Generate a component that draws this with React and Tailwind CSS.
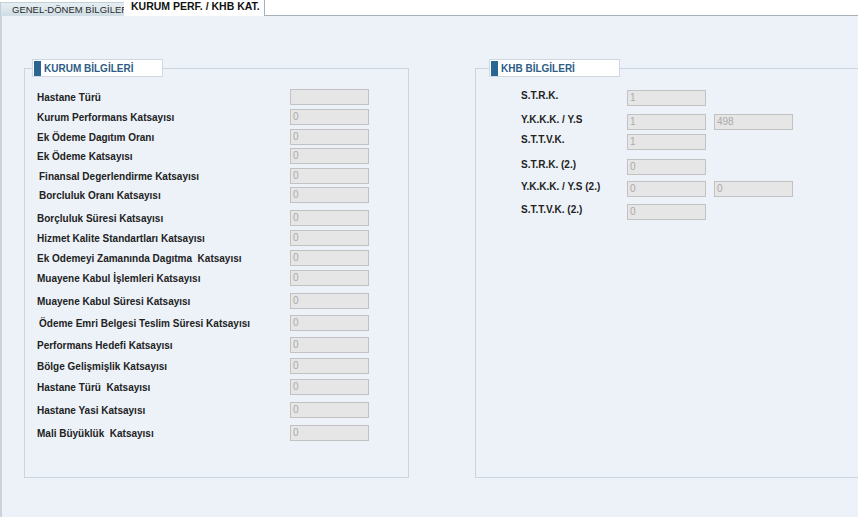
const kurumRows = [
  { label: "Hastane Türü", value: "", h: "h-[20px]" },
  { label: "Kurum Performans Katsayısı", value: "0", h: "h-[20px]" },
  { label: "Ek Ödeme Dagıtım Oranı", value: "0", h: "h-[19px]" },
  { label: "Ek Ödeme Katsayısı", value: "0", h: "h-[20px]" },
  { label: "Finansal Degerlendirme Katsayısı", value: "0", h: "h-[19px]", indent: true },
  { label: "Borcluluk Oranı Katsayısı", value: "0", h: "h-[23px]", indent: true },
  { label: "Borçluluk Süresi Katsayısı", value: "0", h: "h-[20px]" },
  { label: "Hizmet Kalite Standartları Katsayısı", value: "0", h: "h-[20px]" },
  { label: "Ek Odemeyi Zamanında Dagıtma  Katsayısı", value: "0", h: "h-[20px]" },
  { label: "Muayene Kabul İşlemleri Katsayısı", value: "0", h: "h-[23px]" },
  { label: "Muayene Kabul Süresi Katsayısı", value: "0", h: "h-[22px]" },
  { label: "Ödeme Emri Belgesi Teslim Süresi Katsayısı", value: "0", h: "h-[22px]", indent: true },
  { label: "Performans Hedefi Katsayısı", value: "0", h: "h-[21px]" },
  { label: "Bölge Gelişmişlik Katsayısı", value: "0", h: "h-[21px]" },
  { label: "Hastane Türü  Katsayısı", value: "0", h: "h-[23px]" },
  { label: "Hastane Yasi Katsayısı", value: "0", h: "h-[23px]" },
  { label: "Mali Büyüklük  Katsayısı", value: "0", h: "h-[20px]" },
];

const khbRows = [
  { label: "S.T.R.K.", values: ["1"], h: "h-[24px]" },
  { label: "Y.K.K.K. / Y.S", values: ["1", "498"], h: "h-[20px]" },
  { label: "S.T.T.V.K.", values: ["1"], h: "h-[25px]" },
  { label: "S.T.R.K. (2.)", values: ["0"], h: "h-[22px]" },
  { label: "Y.K.K.K. / Y.S (2.)", values: ["0", "0"], h: "h-[23px]" },
  { label: "S.T.T.V.K. (2.)", values: ["0"], h: "h-[20px]" },
];

const font = "font-['Liberation_Sans',Arial,sans-serif]";

const Field = ({ value }) => (
  <div className="w-[79px] h-[16px] shrink-0 bg-[#e6e6e6] border border-[#c2c2c2] px-[2px] text-[10px] leading-[14px] text-[#aaaaaa]">
    {value}
  </div>
);

const Legend = ({ title, left }) => (
  <div
    className={`absolute top-[-10px] ${left} w-[131px] h-[18px] bg-white border border-[#cdd8e2] flex items-center pl-[1px]`}
  >
    <div className="w-[7px] h-[15px] bg-[#2b6592]" />
    <span className="ml-[3px] text-[10px] font-bold text-[#2d5d86]">{title}</span>
  </div>
);

const App = () => {
  return (
    <div className={`w-[858px] h-[517px] overflow-hidden bg-[#edf2f9] ${font} flex flex-col`}>
      {/* tabs */}
      <div className="flex h-[16px] shrink-0 bg-white">
        <div className="w-[124px] h-[14px] mt-[2px] overflow-hidden whitespace-nowrap bg-gradient-to-b from-[#e6eef2] to-[#cfdde5] border-t border-l border-[#c4d0d8] pl-[11px] text-[9.5px] leading-[13px] text-[#2a2a2a]">
          GENEL-DÖNEM BİLGİLERİ
        </div>
        <div className="w-[141px] h-[16px] bg-white border-r border-[#a9b1b8] pl-[7px] text-[10.5px] font-bold leading-[13px] text-[#111]">
          KURUM PERF. / KHB KAT.
        </div>
        <div className="flex-1 border-b border-[#a9b1b8]" />
      </div>

      {/* content */}
      <div className="flex-1 border-l-2 border-[#c9d3dc] pt-[52px] pl-[22px] flex gap-[66px]">
        {/* kurum */}
        <div className="relative w-[385px] h-[410px] shrink-0 border border-[#c9d5e0] pt-[20px] pl-[12px]">
          <Legend title="KURUM BİLGİLERİ" left="left-[7px]" />
          {kurumRows.map((r) => (
            <div key={r.label} className={`flex ${r.h}`}>
              <div
                className={`w-[253px] shrink-0 text-[10px] font-bold text-[#222] whitespace-pre leading-[17px] ${
                  r.indent ? "pl-[2px]" : ""
                }`}
              >
                {r.label}
              </div>
              <Field value={r.value} />
            </div>
          ))}
        </div>

        {/* khb */}
        <div className="relative w-[400px] h-[410px] shrink-0 border border-[#c9d5e0] pt-[21px] pl-[45px]">
          <Legend title="KHB BİLGİLERİ" left="left-[13px]" />
          {khbRows.map((r) => (
            <div key={r.label} className={`flex ${r.h}`}>
              <div className="w-[106px] shrink-0 text-[10px] font-bold text-[#222] leading-[12px]">{r.label}</div>
              <div className="flex gap-[8px]">
                {r.values.map((v, i) => (
                  <Field key={i} value={v} />
                ))}
              </div>
            </div>
          ))}
        </div>
      </div>
    </div>
  );
};

export default App;
